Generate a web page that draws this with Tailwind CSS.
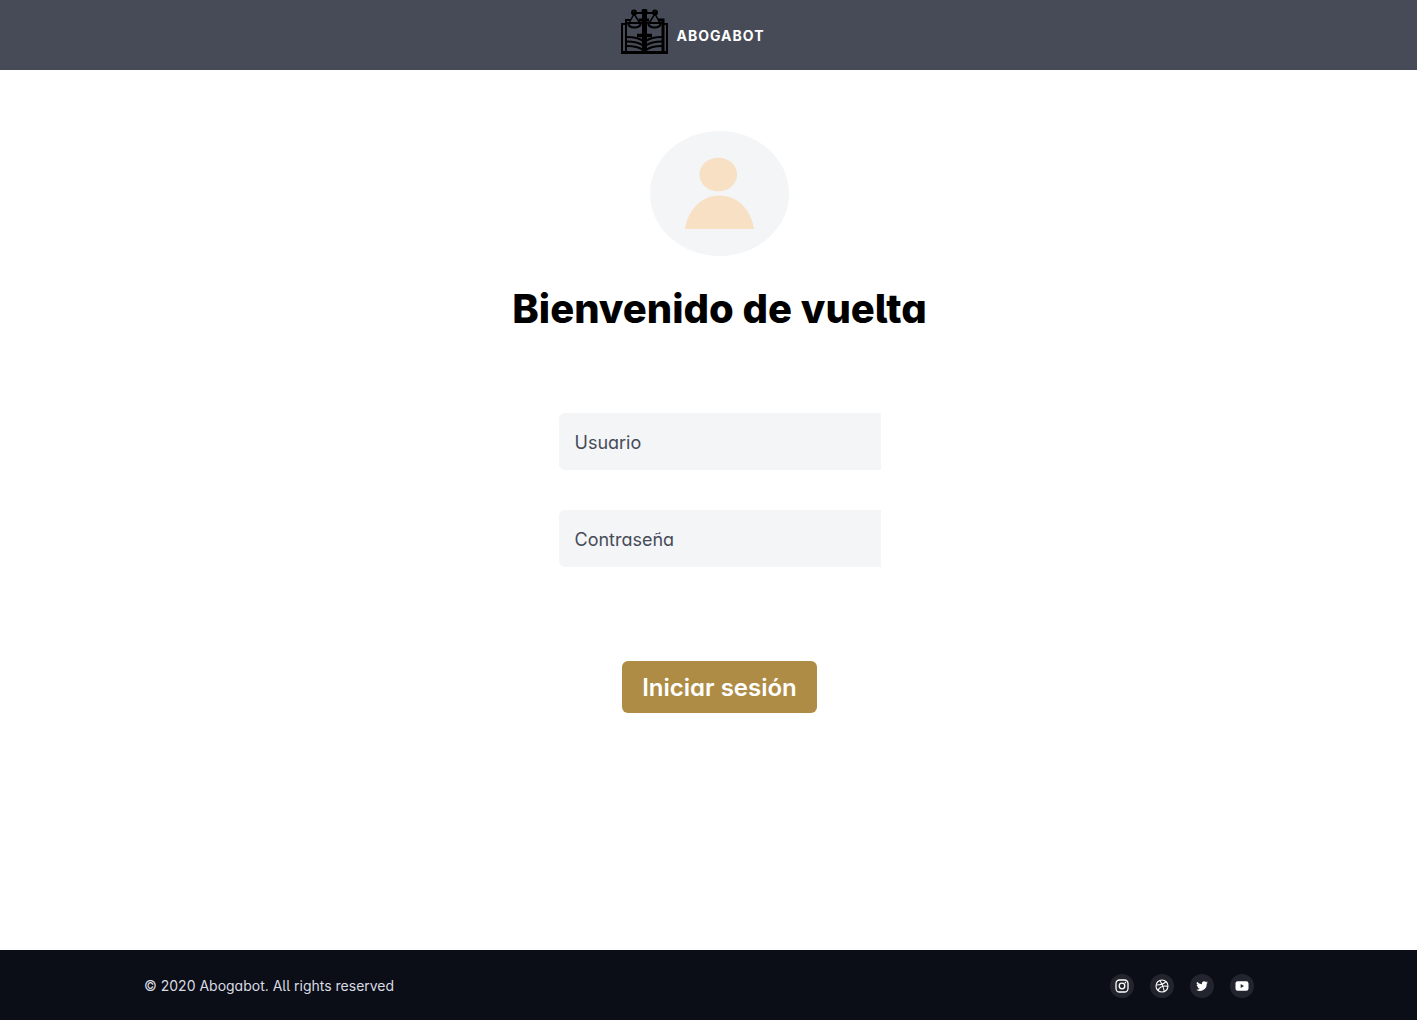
<!DOCTYPE html>
<html lang="es">
<head>
<meta charset="utf-8">
<meta name="viewport" content="width=device-width, initial-scale=1">
<title>Abogabot</title>
<script src="https://cdn.jsdelivr.net/npm/@tailwindcss/browser@4"></script>
</head>
<body class="flex min-h-screen flex-col bg-white font-['Inter',sans-serif] [font-feature-settings:'cv11','cv05']">
<header class="flex h-[70px] shrink-0 items-center justify-center bg-[#474b57] pr-8">
  <a href="#" class="flex items-center gap-2 pb-1.5">
    <svg class="h-[46px] w-12" viewBox="0 0 48 46" fill="none" stroke="#000" stroke-width="2" aria-hidden="true">
      <path d="M6 15H1v29h45V15h-5"/>
      <path d="M5 43V11h5"/>
      <path d="M42 43V11h-5M18 11h10" stroke-width="3"/>
      <path d="M23.500 1v43" stroke-width="5"/>
      <path d="M12 4h23" stroke-width="2"/>
      <path d="M16 26.500h15" stroke-width="3.500"/>
      <circle cx="13" cy="3.500" r="2"/><circle cx="34" cy="3.500" r="2"/><circle cx="23.500" cy="2.500" r="2"/>
      <path d="M13 5L8 14M13 5l6 9M34 5l-6 9M34 5l5 9" stroke-width="1.500"/>
      <path d="M7 14h13c-1 6-12 6-13 0zM27 14h13c-1 6-12 6-13 0z"/>
      <path d="M6 28c7 0 12 1 16 4M6 32.500c7 0 12 1 16 4M6 37c7 0 12 1 16 4M41 28c-7 0-12 1-16 4M41 32.500c-7 0-12 1-16 4M41 37c-7 0-12 1-16 4" stroke-width="2"/>
      <path d="M0 43.500h47" stroke-width="3"/>
    </svg>
    <span class="pt-2 text-sm font-bold tracking-[1px] text-white">ABOGABOT</span>
  </a>
</header>
<main class="flex grow flex-col items-center pt-[61px] pl-[22px]">
  <svg class="h-[125px] w-[139px]" viewBox="0 0 139 125" role="img" aria-label="Usuario">
    <ellipse cx="69.500" cy="62.500" rx="69.500" ry="62.500" fill="#f3f5f7"/>
    <ellipse cx="68.300" cy="43.500" rx="18.800" ry="16.800" fill="#f8e0c5"/>
    <path d="M35 98C38 79 51 64.500 69.500 64.500S101 79 104 98z" fill="#f8e0c5"/>
  </svg>
  <h1 class="mt-7 text-[40px] leading-[50px] font-extrabold text-black">Bienvenido de vuelta</h1>
  <form class="mt-[79px] flex flex-col items-center">
    <input type="text" aria-label="Usuario" placeholder="Usuario" class="h-[57px] w-[322px] rounded-l-md bg-[#f3f5f7] px-4 pt-0.5 text-lg text-[#474b57] outline-none placeholder:text-[#474b57]">
    <input type="password" aria-label="Contraseña" placeholder="Contraseña" class="mt-10 h-[57px] w-[322px] rounded-l-md bg-[#f3f5f7] px-4 pt-0.5 text-lg text-[#474b57] outline-none placeholder:text-[#474b57]">
    <button type="submit" class="mt-[94px] h-[52px] rounded-md bg-[#ae8c45] px-5 pt-0.5 text-2xl font-semibold text-white">Iniciar sesión</button>
  </form>
</main>
<footer class="flex h-[70px] shrink-0 items-center justify-between bg-[#0b0d17] pt-0.5 pr-[163px] pl-36">
  <p class="text-sm text-[#d9dbe1]">© 2020 Abogabot. All rights reserved</p>
  <nav class="flex gap-4" aria-label="Redes sociales">
    <a href="#" aria-label="Instagram" class="flex size-6 items-center justify-center rounded-full bg-[#23252e]">
      <svg class="size-[14px]" viewBox="0 0 14 14" fill="none" stroke="#fff" stroke-width="1.300"><rect x="1" y="1" width="12" height="12" rx="3.500"/><circle cx="7" cy="7" r="2.800"/><circle cx="10.400" cy="3.600" r=".8" fill="#fff" stroke="none"/></svg>
    </a>
    <a href="#" aria-label="Dribbble" class="flex size-6 items-center justify-center rounded-full bg-[#23252e]">
      <svg class="size-[14px]" viewBox="0 0 14 14" fill="none" stroke="#fff" stroke-width="1.100"><circle cx="7" cy="7" r="6"/><path d="M4.800 1.500C7 4.300 8.500 7.500 9.300 12.500M1.200 6c4 0 7.500-.5 9.800-3.300M3 11.400c1.800-3.600 5.300-5 9.900-4"/></svg>
    </a>
    <a href="#" aria-label="Twitter" class="flex size-6 items-center justify-center rounded-full bg-[#23252e]">
      <svg class="size-[14px]" viewBox="0 0 24 24" fill="#fff"><path d="M22 5.900a8 8 0 0 1-2.400.7 4 4 0 0 0 1.800-2.300 8 8 0 0 1-2.600 1 4.100 4.100 0 0 0-7 3.700A11.600 11.600 0 0 1 3.400 4.700a4.100 4.100 0 0 0 1.300 5.500 4 4 0 0 1-1.900-.5c0 2 1.400 3.700 3.300 4.100a4 4 0 0 1-1.800.1 4.100 4.100 0 0 0 3.800 2.800A8.200 8.200 0 0 1 2 18.400 11.600 11.600 0 0 0 20 8a8 8 0 0 0 2-2.100z"/></svg>
    </a>
    <a href="#" aria-label="YouTube" class="flex size-6 items-center justify-center rounded-full bg-[#23252e]">
      <svg class="size-[14px]" viewBox="0 0 14 14"><rect x=".5" y="2.300" width="13" height="9.400" rx="2.200" fill="#fff"/><path d="M5.700 5v4L9 7z" fill="#23252e"/></svg>
    </a>
  </nav>
</footer>
</body>
</html>
